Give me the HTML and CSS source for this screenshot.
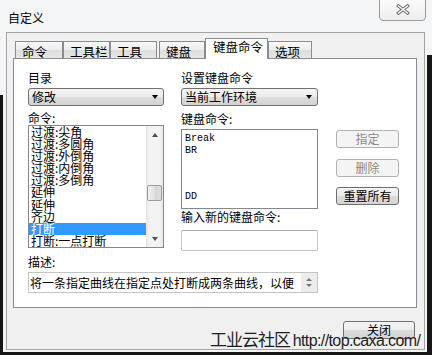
FILE: index.html
```html
<!DOCTYPE html>
<html lang="zh-CN">
<head>
    <meta charset="UTF-8">
    <title>自定义</title>
    <link rel="stylesheet" href="styles.css">
</head>
<body>
    <div class="window">
        <div class="titlebar">
            <span class="title">自定义</span>
            <button class="close-btn">
                <svg width="14" height="11" viewBox="0 0 14 11">
                    <path d="M2.5 2 L11.5 9 M11.5 2 L2.5 9" stroke="#6e6e6e" stroke-width="3.4" stroke-linecap="square" fill="none"/>
                    <path d="M2.5 2 L11.5 9 M11.5 2 L2.5 9" stroke="#ffffff" stroke-width="1.4" stroke-linecap="square" fill="none"/>
                </svg>
            </button>
        </div>

        <div class="client">
            <div class="tabs">
                <div class="tab tab-w48">命令</div>
                <div class="tab tab-w47">工具栏</div>
                <div class="tab tab-w47">工具</div>
                <div class="tab tab-w46 tab-gap">键盘</div>
                <div class="tab tab-active">键盘命令</div>
                <div class="tab tab-w44">选项</div>
            </div>

            <div class="panel">
                <div class="panel-grid">
                    <!-- left column: category + commands -->
                    <div class="col">
                        <div class="field-label">目录</div>
                        <div class="combo"><span>修改</span><i class="combo-arrow"></i></div>
                        <div class="field-label mt5">命令:</div>
                        <div class="listbox cmd-list">
                            <ul class="cmd-items">
                                <li>过渡:尖角</li>
                                <li>过渡:多圆角</li>
                                <li>过渡:外倒角</li>
                                <li>过渡:内倒角</li>
                                <li>过渡:多倒角</li>
                                <li>延伸</li>
                                <li>延伸</li>
                                <li>齐边</li>
                                <li class="selected">打断</li>
                                <li>打断:一点打断</li>
                            </ul>
                            <div class="vscroll">
                                <div class="sb-btn"><i class="tri-up"></i></div>
                                <div class="sb-space"></div>
                                <div class="sb-thumb"></div>
                                <div class="sb-fill"></div>
                                <div class="sb-btn"><i class="tri-down"></i></div>
                            </div>
                        </div>
                    </div>

                    <!-- middle column: key settings -->
                    <div class="col">
                        <div class="field-label">设置键盘命令</div>
                        <div class="combo"><span>当前工作环境</span><i class="combo-arrow"></i></div>
                        <div class="field-label mt6">键盘命令:</div>
                        <ul class="listbox key-list">
                            <li>Break</li>
                            <li>BR</li>
                            <li></li>
                            <li></li>
                            <li></li>
                            <li>DD</li>
                        </ul>
                        <div class="field-label mt1">输入新的键盘命令:</div>
                        <div class="textbox"></div>
                    </div>

                    <!-- right column: buttons -->
                    <div class="col btn-col">
                        <button class="btn btn-disabled btn-assign">指定</button>
                        <button class="btn btn-disabled btn-delete">删除</button>
                        <button class="btn btn-reset">重置所有</button>
                    </div>
                </div>

                <div class="field-label desc-label">描述:</div>
                <div class="desc-box">
                    <span class="desc-text">将一条指定曲线在指定点处打断成两条曲线，以便</span>
                    <div class="desc-spin"><i class="tri-up small"></i><i class="tri-down small"></i></div>
                </div>
            </div>

            <div class="dlg-footer">
                <button class="btn btn-close">关闭</button>
            </div>
        </div>

        <div class="watermark"><span class="wm-cn">工业云社区</span> <span class="wm-url">http://top.caxa.com/</span></div>
    </div>
</body>
</html>
```

FILE: styles.css
```css
* {
    margin: 0;
    padding: 0;
    box-sizing: border-box;
}

body {
    width: 432px;
    height: 355px;
    overflow: hidden;
    font-family: "Noto Sans CJK SC", "Noto Sans", sans-serif;
    font-size: 12px;
    color: #000;
    background: #f4f5f7;
}

.window {
    position: relative;
    width: 432px;
    height: 355px;
    background:
        linear-gradient(#161616, #161616) 0 95px / 3px 260px no-repeat,
        linear-gradient(#161616, #161616) 427px 55px / 5px 300px no-repeat,
        linear-gradient(#161616, #161616) 0 352px / 432px 3px no-repeat,
        #f4f5f7;
}

.titlebar {
    height: 32px;
    display: flex;
    justify-content: space-between;
    align-items: flex-start;
}

.title {
    padding: 10px 0 0 8px;
    line-height: 16px;
    font-size: 12px;
}

.close-btn {
    width: 47px;
    height: 22px;
    margin: -1px 6px 0 0;
    padding-top: 4px;
    border: 1px solid #9a9a9a;
    border-radius: 0 0 4px 4px;
    background: linear-gradient(#fbfbfb, #eeeeee);
    display: flex;
    justify-content: center;
    align-items: flex-start;
}

.client {
    margin-left: 6px;
    width: 419px;
    height: 318px;
    border: 1px solid #a3a3a3;
    background: #f0f0f0;
    padding: 5px 0 0 6px;
}

/* tabs */
.tabs {
    height: 20px;
    display: flex;
    align-items: flex-end;
    padding-left: 2px;
}

.tab {
    height: 17px;
    border: 1px solid #898c95;
    border-bottom: none;
    background: linear-gradient(#f8f8f8, #ececec 50%, #dedede 51%, #e6e6e6);
    font-size: 12.5px;
    line-height: 14px;
    padding: 3px 0 0 6px;
    white-space: nowrap;
}

.tab-w48 { width: 48px; }
.tab-w47 { width: 47px; }
.tab-w46 { width: 46px; }
.tab-w44 { width: 44px; }
.tab-gap { margin-left: 2px; }

.tab-active {
    position: relative;
    z-index: 1;
    width: 63px;
    height: 21px;
    margin-bottom: -1px;
    background: #fff;
    padding: 1px 0 0 7px;
}

.panel {
    width: 404px;
    height: 250px;
    border: 1px solid #898c95;
    background: #fff;
    padding: 12px 0 0 14px;
}

.panel-grid {
    display: grid;
    grid-template-columns: 136px 137px 64px;
    column-gap: 17px;
    height: 180px;
}

.col {
    display: flex;
    flex-direction: column;
}

.btn-col {
    margin-left: 1px;
}

.field-label {
    height: 14px;
    line-height: 14px;
    white-space: nowrap;
}

.mt1 { margin-top: 1px; }
.mt5 { margin-top: 5px; }
.mt6 { margin-top: 6px; }

.combo {
    margin-top: 3px;
    height: 18px;
    border: 1px solid #707070;
    border-radius: 3px;
    background: linear-gradient(#f4f4f4, #ebebeb 50%, #dddddd 51%, #d3d3d3);
    display: flex;
    align-items: center;
    justify-content: space-between;
    padding: 0 5px 0 3px;
    line-height: 16px;
}

.combo-arrow {
    width: 0;
    height: 0;
    border-left: 3.5px solid transparent;
    border-right: 3.5px solid transparent;
    border-top: 4px solid #000;
}

.listbox {
    border: 1px solid #828790;
    background: #fff;
    list-style: none;
}

.cmd-list {
    height: 123px;
    display: flex;
    overflow: hidden;
}

.cmd-items {
    flex: 1;
    list-style: none;
}

.cmd-items li {
    height: 12.1px;
    line-height: 12.1px;
    padding-left: 2px;
    white-space: nowrap;
}

.cmd-items li.selected {
    background: #3399ff;
    color: #fff;
}

.vscroll {
    width: 17px;
    display: flex;
    flex-direction: column;
    background: linear-gradient(90deg, #e3e3e3, #f3f3f3 20%, #f3f3f3 80%, #e6e6e6);
}

.sb-btn {
    height: 17px;
    display: flex;
    align-items: center;
    justify-content: center;
}

.sb-space {
    height: 42px;
}

.sb-thumb {
    height: 16px;
    margin: 0 1px;
    border: 1px solid #9b9b9b;
    border-radius: 2px;
    background: linear-gradient(90deg, #f0f0f0, #e0e0e0 50%, #d4d4d4 51%, #dedede);
}

.sb-fill {
    flex: 1;
}

.tri-up,
.tri-down {
    width: 0;
    height: 0;
    border-left: 3.5px solid transparent;
    border-right: 3.5px solid transparent;
}

.tri-up { border-bottom: 4px solid #505050; }
.tri-down { border-top: 4px solid #505050; }

.tri-up.small { border-bottom-width: 3px; border-left-width: 3px; border-right-width: 3px; border-bottom-color: #7a7a7a; }
.tri-down.small { border-top-width: 3px; border-left-width: 3px; border-right-width: 3px; border-top-color: #7a7a7a; }

.key-list {
    margin-top: 3px;
    height: 80px;
    padding: 3px 0 0 3px;
    font-family: "Liberation Mono", monospace;
    font-size: 10px;
    overflow: hidden;
}

.key-list li {
    height: 11.6px;
    line-height: 11.6px;
}

.textbox {
    margin-top: 6px;
    height: 21px;
    border: 1px solid #c2c4c8;
    border-top-color: #a9abb0;
    border-radius: 2px;
    background: #fff;
}

.btn {
    height: 18px;
    border: 1px solid #707070;
    border-radius: 3px;
    background: linear-gradient(#f4f4f4, #ebebeb 50%, #dddddd 51%, #d3d3d3);
    font-family: "Noto Sans CJK SC", sans-serif;
    font-size: 12px;
    line-height: 16px;
    color: #000;
}

.btn-disabled {
    border-color: #adb2b5;
    background: #f4f4f4;
    color: #8a8a8a;
}

.btn-assign { margin-top: 59px; }
.btn-delete { margin-top: 11px; }
.btn-reset { margin-top: 10px; }

.desc-label {
    margin-top: 4px;
}

.desc-box {
    margin-top: 3px;
    width: 290px;
    height: 21px;
    border: 1px solid #c4c4c4;
    display: flex;
    justify-content: space-between;
    overflow: hidden;
}

.desc-text {
    padding-left: 1px;
    line-height: 19px;
    white-space: nowrap;
}

.desc-spin {
    width: 16px;
    background: #ececec;
    display: flex;
    flex-direction: column;
    align-items: center;
    justify-content: center;
    gap: 3px;
}

.dlg-footer {
    margin-top: 13px;
    display: flex;
    justify-content: flex-end;
    padding-right: 9px;
}

.btn-close {
    width: 72px;
}

.watermark {
    position: absolute;
    left: 210px;
    top: 329px;
    line-height: 20px;
    color: #1e1e1e;
    white-space: nowrap;
}

.wm-cn {
    font-size: 17px;
    letter-spacing: -1px;
}

.wm-url {
    font-family: "Liberation Sans", sans-serif;
    font-size: 16px;
    letter-spacing: -0.6px;
}
```
